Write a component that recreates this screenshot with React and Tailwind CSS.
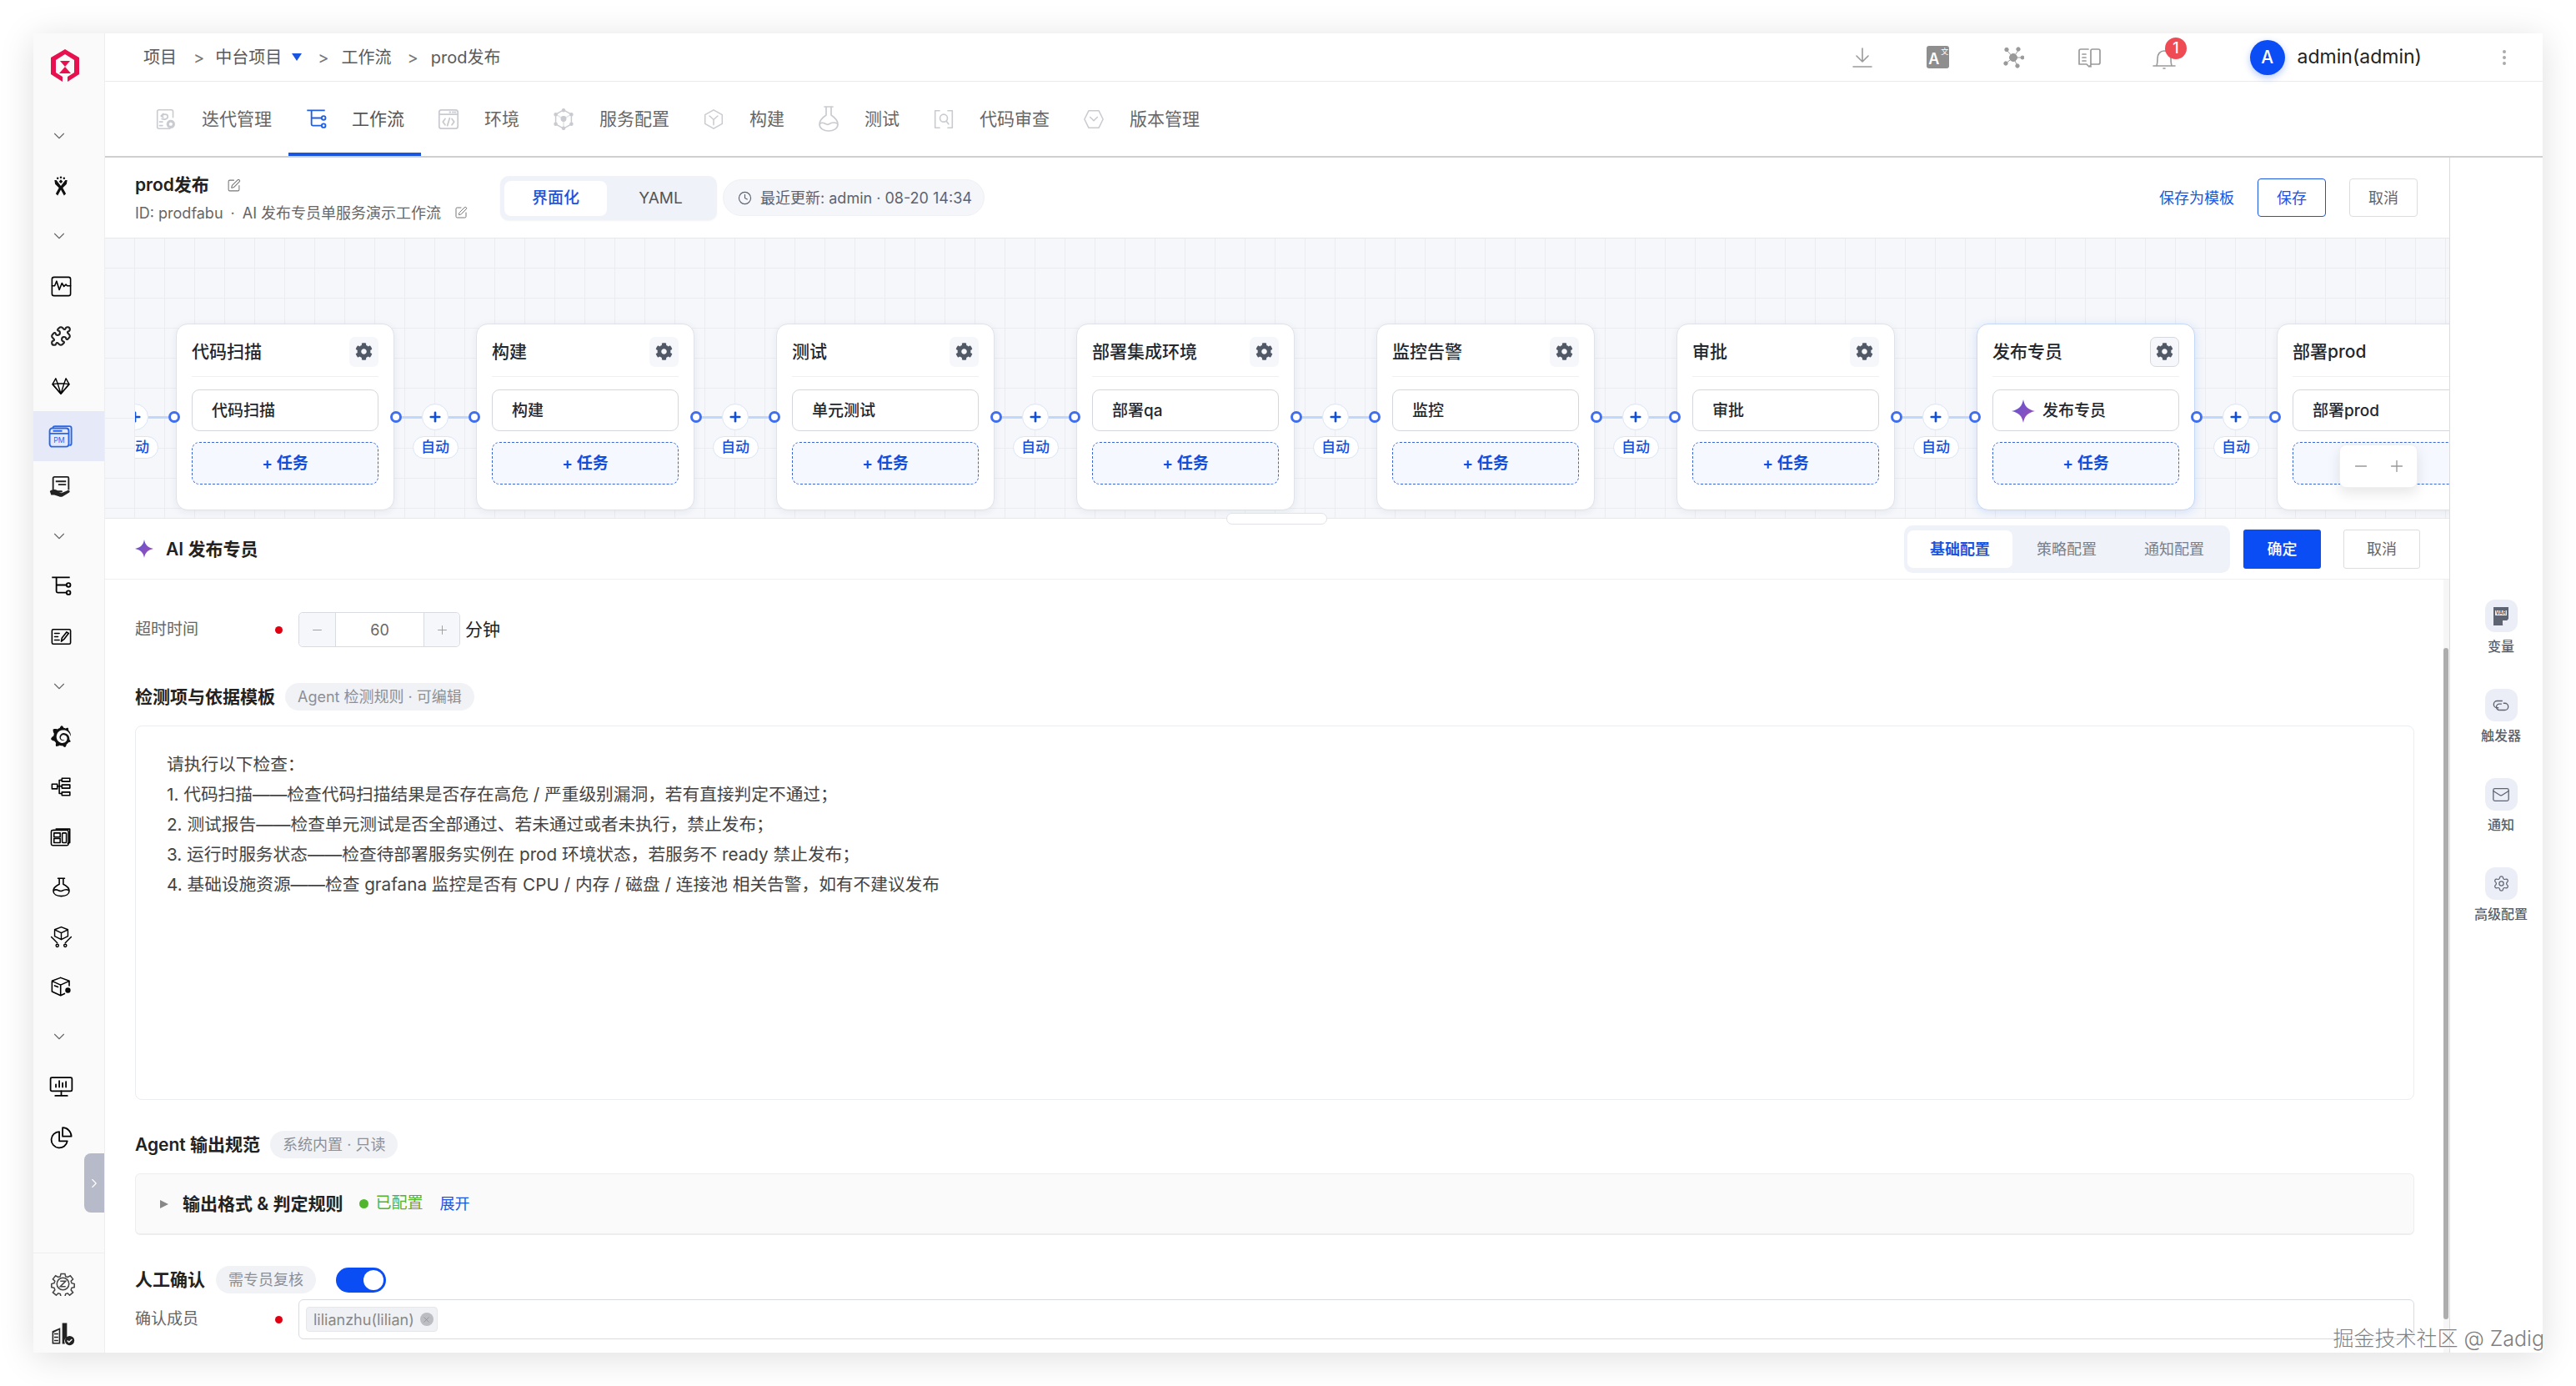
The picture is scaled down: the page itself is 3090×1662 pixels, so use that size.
import React from "react";
import { FaCog } from "react-icons/fa";
import { SiGrafana } from "react-icons/si";
import { ChevronDown, ChevronRight, Puzzle, Minus, Plus, Clock, SquarePen, EllipsisVertical, X, Settings, Mail } from "lucide-react";

const Svg = ({ s = 27, w, h, vb = "0 0 34 34", sw = 2, children, className = "" }) => (
  <svg width={w || s} height={h || s} viewBox={vb} fill="none" stroke="currentColor" strokeWidth={sw} strokeLinecap="round" strokeLinejoin="round" className={className}>{children}</svg>
);

const Logo = () => (
  <svg width="40" height="48" viewBox="0 0 40 48" fill="none">
    <path d="M15 6 20 3l5 3 12 7v20l-14 9V36l8-5V16l-11-7-11 7v15l8 5v6L3 33V13z" fill="#e8114f" />
    <path d="M14 17h12l-6 7zM20 24l7 8H13z" fill="#e8114f" />
  </svg>
);

const Jenkins = () => (
  <svg width="26" height="26" viewBox="0 0 34 34" fill="#111">
    <circle cx="12" cy="5" r="1.6" /><circle cx="17" cy="3.5" r="1.6" /><circle cx="22" cy="5" r="1.6" />
    <path d="M17 7l3 3-3 3-3-3z" />
    <path d="M7 8l3 0 7 9 7-9 3 0-1 6-6 6 5 9-3 3-5-9-5 9-3-3 5-9-6-6z" />
  </svg>
);
const Monitor = () => <Svg><rect x="3" y="3" width="28" height="28" rx="3" /><path d="M3 16h4l3-7 4 13 4-10 3 5 3-3 2 2h5" /></Svg>;
const Fox = () => (
  <Svg s={26} sw={1.8}><path d="M4 14 9 5l3 8h10l3-8 5 9-13 15z" /><path d="M4 14l13 15 M12 13l5 16 5-16 M30 14 17 29 M4 14l8-1 M30 14l-8-1" /></Svg>
);
const PM = () => (
  <svg width="30" height="30" viewBox="0 0 38 38" fill="none" stroke="#2a66ec" strokeWidth="2.400">
    <path d="M7 7c0-2 1-3 3-3h22c2 0 3 1 3 3v23c0 2-1 3-3 3" />
    <rect x="2" y="7" width="29" height="28" rx="4" />
    <path d="M2 15h29 M7 11h14" />
    <text x="16.5" y="29" fontSize="11" fontFamily="Inter" fill="#2a66ec" stroke="none" textAnchor="middle">PM</text>
  </svg>
);
const HandCard = () => (
  <svg width="28" height="27" viewBox="0 0 36 34" fill="none" stroke="#222" strokeWidth="2.400">
    <path d="M6 22V4c0-1 1-2 2-2h20c1 0 2 1 2 2v18" /><path d="M10 9h16M14 14h12" />
    <path d="M1 24c4-3 8-3 12-1h6c2 0 2 3 0 3h-4l4 1 9-4c3-1 5 1 3 3l-10 6c-2 1-4 1-6 0l-7-2H3z" fill="#222" stroke="none" />
  </svg>
);
const Flow = ({ color = "currentColor", s = 26 }) => (
  <svg width={s} height={s} viewBox="0 0 34 34" fill="none" stroke={color} strokeWidth="2.400">
    <path d="M3 3h28M10 3v22c0 1 1 2 2 2h14M10 15h16" /><circle cx="29" cy="15" r="3" /><circle cx="29" cy="27" r="3" />
  </svg>
);
const Edit2 = () => <Svg><rect x="3" y="6" width="28" height="22" rx="2" /><path d="M7 12h7M7 17h5M7 22h7M17 24l1-5 7-9 3 2-7 9z" /></Svg>;
const Modules = () => <Svg><rect x="3" y="13" width="8" height="7" /><rect x="18" y="4" width="12" height="5" /><rect x="18" y="14" width="12" height="5" /><rect x="18" y="25" width="12" height="5" /><path d="M11 16h7M14 7h4M14 7v20h4" /></Svg>;
const Panels = () => <Svg s={28} sw={1.9}><path d="M10 6h20v20l-3 1M6 8l24-2" /><rect x="3" y="8" width="25" height="22" rx="2" /><rect x="7" y="12" width="9" height="6" /><rect x="7" y="20" width="9" height="6" /><rect x="19" y="12" width="6" height="14" rx="1" /></Svg>;
const Flask = () => <Svg><path d="M12 4h10M14 4v9C8 16 5 19 5 23c0 5 5 8 12 8s12-3 12-8c0-4-3-7-9-10V4" /><path d="M6 22c5-3 8 3 12 1s7-3 10-1" /></Svg>;
const BoxHands = () => <Svg sw={1.8}><path d="M17 2l10 4v10l-10 5-10-5V6zM7 6l10 5 10-5M17 11v10" /><path d="M2 17l6 6 3 3M32 17l-6 6-3 3" /><circle cx="11" cy="30" r="2" /><circle cx="23" cy="30" r="2" /></Svg>;
const BoxGear = () => <Svg sw={2}><path d="M16 3l13 5v7M16 3 3 8v16l13 6 6-3M3 8l13 6 13-6M16 14v16M7 15l5 2" /><circle cx="27" cy="22" r="3" fill="#111" /></Svg>;
const Board = () => <Svg s={29} vb="0 0 36 36" sw={2.200}><rect x="2" y="4" width="32" height="20" rx="2" /><path d="M18 24v7M9 31h18M10 18v-4M15 18V9M20 18v-6M25 18v-8" /></Svg>;
const Pie = () => <Svg s={29} vb="0 0 36 36" sw={2.200}><path d="M15 10a12 12 0 1 0 12 14H15z" /><path d="M20 4a13 13 0 0 1 13 13H20z" /></Svg>;
const GearZ = () => (
  <svg width="29" height="29" viewBox="0 0 36 36" fill="none" stroke="#444" strokeWidth="1.900">
    <path d="M15 3h6l1 4 3 1 4-2 4 5-3 3 1 3 4 1v5l-4 1-1 3 3 4-5 4-3-3-3 1-1 4h-6l-1-4-3-1-3 3-5-4 3-4-1-3-4-1v-5l4-1 1-3-3-3 4-5 4 2 3-1z" />
    <circle cx="18" cy="18" r="9" /><path d="M14 14h8l-8 8h8" />
  </svg>
);
const Building = () => (
  <svg width="29" height="29" viewBox="0 0 36 36" fill="#222">
    <path d="M2 14 14 9v24H2zM4 16v15h8V12z" fillRule="evenodd" /><path d="M5 17h6v2H5zM5 22h6v2H5zM5 27h6v2H5z" />
    <path d="M17 2h7v21a8 8 0 0 0-3 10h-4z" /><circle cx="28" cy="28" r="7" /><path d="M24.500 28l2.500 2.500 4.500-4.500" stroke="#fafafa" strokeWidth="1.800" fill="none" />
  </svg>
);

const T1 = () => <Svg s={26} vb="0 0 29 29" sw={1.8}><path d="M20 27H5c-1 0-2-1-2-2V4c0-1 1-2 2-2h17c1 0 2 1 2 2v8" /><path d="M9 11c1-4 8-4 8 0s-5 4-8 3M11 7 8 10l3 2M6 18h4M6 23h4" /><circle cx="21" cy="21" r="4" strokeWidth="3.500" strokeDasharray="2.500 1" /></Svg>;
const T3 = () => <Svg s={26} vb="0 0 29 29"><rect x="2" y="2" width="25" height="25" rx="3" /><path d="M2 8h25M16 5h1M20 5h1M23 5h1M10 14l-3 4 3 4M19 14l3 4-3 4M16 13l-3 10" /></Svg>;
const T4 = () => <Svg s={26} vb="0 0 29 29" sw={1.7}><path d="M14.500 2 25 8v13l-10.500 6L4 21V8z" /><path d="M4 8l10.500 6L25 8M14.500 14v13" opacity=".5" /><circle cx="14.500" cy="14" r="3" fill="currentColor" /><circle cx="14.500" cy="2.500" r="1.700" fill="currentColor" /><circle cx="14.500" cy="26.500" r="1.700" fill="currentColor" /><circle cx="4" cy="8" r="1.700" fill="currentColor" /><circle cx="25" cy="8" r="1.700" fill="currentColor" /><circle cx="4" cy="21" r="1.700" fill="currentColor" /><circle cx="25" cy="21" r="1.700" fill="currentColor" /></Svg>;
const T5 = () => <Svg s={26} vb="0 0 29 29" sw={1.7}><path d="M14.500 2 26 8.500v12L14.500 27 3 20.500v-12z" /><path d="M9 10l5.500 5L20 10M14.500 15v7" /></Svg>;
const T6 = () => <Svg w={26} h={33} vb="0 0 26 33" sw={1.7}><path d="M8 2h10M10 2v10C4 16 2 20 2 23c0 5 5 8 11 8s11-3 11-8c0-3-2-7-8-11V2" /><path d="M3 22c4-3 7 3 10 1s6-3 10-1" /></Svg>;
const T7 = () => <Svg s={26} vb="0 0 29 29" sw={1.8}><path d="M9 3H3v23h6M20 3h6v23h-6" /><circle cx="14.500" cy="13" r="5" /><path d="M18 17l3 4" /></Svg>;
const T8 = () => <Svg w={26} h={24} vb="0 0 30 28" sw={1.8}><path d="M8 2h14l6 12-6 12H8L2 14z" /><path d="M10 11l5 5 5-5" /></Svg>;

const Card = ({ title, task, active, star }) => (
  <div className={`w-[262px] h-[224px] shrink-0 rounded-[14px] bg-white px-[18px] border ${active ? "border-[#c4d8f8] shadow-[0_2px_12px_rgba(60,110,220,0.18)]" : "border-[#dfe2e8] shadow-[0_2px_10px_rgba(30,40,70,0.07)]"}`}>
    <div className="h-[63px] pt-[3px] flex items-center justify-between border-b border-[#eff0f3] whitespace-nowrap">
      <span className="text-[21px] leading-[28px] font-medium text-[#23272e]">{title}</span>
      <span className={`w-[35px] h-[36px] rounded-[7px] flex items-center justify-center text-[#525966] bg-[#f5f7fb] ${active ? "border border-[#d5d8de]" : ""}`}>
        <FaCog size={21} />
      </span>
    </div>
    <div className="mt-[15px] h-[50px] pt-[2px] rounded-[9px] border border-[#d4d7dd] bg-white flex items-center pl-[23px] text-[19px] font-medium text-[#23272e] whitespace-nowrap">
      {star && <span className="mr-[9px] -ml-[1px]"><Star size={28} /></span>}{task}
    </div>
    <div className="mt-[13px] h-[51px] pt-[2px] rounded-[9px] border border-dashed border-[#3a66d8] bg-[#f5f8ff] flex items-center justify-center text-[19px] font-semibold text-[#0f4fe0] whitespace-nowrap">+ 任务</div>
  </div>
);

const Star = ({ size = 24 }) => (
  <svg width={size} height={size} viewBox="0 0 28 28" className="block">
    <defs><linearGradient id="st" x1="0" y1="0" x2="1" y2="1"><stop offset="0" stopColor="#5b57d6" /><stop offset="1" stopColor="#a34bb0" /></linearGradient></defs>
    <path d="M14 0c1.500 8 5 12 14 14-9 2-12.500 6-14 14-1.500-8-5-12-14-14 9-2 12.500-6 14-14z" fill="url(#st)" />
  </svg>
);

const Dot = () => <span className="w-[14px] h-[14px] rounded-full border-[3.5px] border-[#3f6fee] bg-white shrink-0" />;

const Connector = () => (
  <div className="w-[98px] shrink-0 relative z-10 pt-[96px] flex flex-col items-center">
    <div className="w-[108px] h-[32px] flex items-center shrink-0">
      <Dot />
      <span className="w-[24px] h-[3px] bg-[#bfd8fb]" />
      <span className="w-[32px] h-[32px] rounded-full bg-white border border-[#dbe5f5] flex items-center justify-center text-[#0f4fe0]"><Plus size={18} strokeWidth={3.5} /></span>
      <span className="w-[24px] h-[3px] bg-[#bfd8fb]" />
      <Dot />
    </div>
    <div className="mt-[7px] w-[55px] h-[27px] rounded-full bg-white border border-[#dbe5f5] flex items-center justify-center text-[17px] font-medium text-[#0f4fe0] whitespace-nowrap">自动</div>
  </div>
);

const Pill = ({ children, className = "" }) => (
  <span className={`h-[33px] px-[15px] rounded-full bg-[#f0f2f6] text-[#8c8f96] text-[18px] flex items-center whitespace-nowrap ${className}`}>{children}</span>
);

const Side = ({ children, active, pr = "pr-[19px]" }) => (
  <div className={`h-[60px] shrink-0 flex items-center justify-center ${pr} ${active ? "bg-[#e6eaf8]" : ""}`}>{children}</div>
);
const Chev = () => <span className="pr-[4px] text-[#666] flex"><ChevronDown size={22} strokeWidth={1.2} /></span>;

const Tab = ({ icon, text, active }) => (
  <div className={`h-full px-[20px] flex items-center gap-[30px] text-[21px] whitespace-nowrap border-b-[4px] pt-[4px] ${active ? "border-[#1a55e0] text-[#555]" : "border-transparent text-[#666]"}`}>
    <span className={active ? "text-[#1f5fe0] flex" : "text-[#c9cbd0] flex"}>{icon}</span>{text}
  </div>
);

const RightItem = ({ icon, label }) => (
  <div className="h-[107px] flex flex-col items-center">
    <span className="w-[39px] h-[39px] rounded-[12px] bg-[#eceef7] flex items-center justify-center text-[#5f6472]">{icon}</span>
    <span className="mt-[7px] text-[16px] leading-[20px] font-medium text-[#5a5f6a] whitespace-nowrap">{label}</span>
  </div>
);

const lines = [
  "请执行以下检查\uFF1A",
  "1. 代码扫描——检查代码扫描结果是否存在高危 / 严重级别漏洞\uFF0C若有直接判定不通过\uFF1B",
  "2. 测试报告——检查单元测试是否全部通过、若未通过或者未执行\uFF0C禁止发布\uFF1B",
  "3. 运行时服务状态——检查待部署服务实例在 prod 环境状态\uFF0C若服务不 ready 禁止发布\uFF1B",
  "4. 基础设施资源——检查 grafana 监控是否有 CPU / 内存 / 磁盘 / 连接池 相关告警\uFF0C如有不建议发布",
];

const cards = [
  { title: "代码扫描", task: "代码扫描" },
  { title: "构建", task: "构建" },
  { title: "测试", task: "单元测试" },
  { title: "部署集成环境", task: "部署qa" },
  { title: "监控告警", task: "监控" },
  { title: "审批", task: "审批" },
  { title: "发布专员", task: "发布专员", active: true, star: true },
  { title: "部署prod", task: "部署prod" },
];

const canvasBg = "bg-[#f5f7fb] bg-[linear-gradient(#e9edf3_1px,transparent_1px),linear-gradient(90deg,#e9edf3_1px,transparent_1px)] bg-[size:36px_36px] bg-[position:-1px_-1px]";

export default function App() {
  return (
    <div className="w-[3090px] h-[1662px] bg-white p-[40px] font-['Inter','Noto_Sans_CJK_SC',sans-serif] relative overflow-hidden">
      <div className="w-[3010px] h-[1582px] bg-white flex shadow-[0_6px_40px_rgba(0,0,0,0.13)] overflow-hidden relative">
        {/* sidebar */}
        <aside className="w-[86px] shrink-0 bg-[#fafafa] border-r border-[#eeeeee] flex flex-col relative">
          <div className="h-[93px] shrink-0 flex items-start justify-center pt-[16px] pr-[10px]"><Logo /></div>
          <Side><Chev /></Side>
          <Side><Jenkins /></Side>
          <Side><Chev /></Side>
          <Side><Monitor /></Side>
          <Side><Puzzle size={26} strokeWidth={1.9} className="text-[#222]" /></Side>
          <Side><Fox /></Side>
          <Side active><PM /></Side>
          <Side><HandCard /></Side>
          <Side><Chev /></Side>
          <Side><Flow /></Side>
          <Side><Edit2 /></Side>
          <Side><Chev /></Side>
          <Side><SiGrafana size={26} color="#111" /></Side>
          <Side><Modules /></Side>
          <Side><Panels /></Side>
          <Side><Flask /></Side>
          <Side><BoxHands /></Side>
          <Side><BoxGear /></Side>
          <Side><Chev /></Side>
          <Side><Board /></Side>
          <Side><Pie /></Side>
          <div className="flex-1" />
          <div className="h-[120px] shrink-0 border-t border-[#eeeeee] pt-[6px]">
            <Side pr="pr-[14px]"><GearZ /></Side>
            <Side pr="pr-[14px]"><Building /></Side>
          </div>
          <div className="absolute left-[61px] top-[1343px] w-[24px] h-[71px] rounded-l-[8px] bg-[#b7bbc9] flex items-center justify-center text-white"><ChevronRight size={18} strokeWidth={1.5} /></div>
        </aside>

        <main className="flex-1 min-w-0 flex flex-col">
          {/* header */}
          <header className="h-[58px] shrink-0 border-b border-[#ebebeb] flex items-center text-[20px] text-[#5a5a5a] whitespace-nowrap pl-[46px]">
            <span>项目</span>
            <span className="ml-[20px] text-[#777]">&gt;</span>
            <span className="ml-[13px]">中台项目</span>
            <span className="ml-[12px] w-0 h-0 border-x-[6.5px] border-x-transparent border-t-[9px] border-t-[#1a55e0]" />
            <span className="ml-[19px] text-[#777]">&gt;</span>
            <span className="ml-[15px]">工作流</span>
            <span className="ml-[19px] text-[#777]">&gt;</span>
            <span className="ml-[15px]">prod发布</span>
            <div className="ml-auto flex items-center">
              <span className="w-[90.5px] flex justify-center text-[#9a9a9a]"><Svg s={26} vb="0 0 26 26" sw={1.6}><path d="M13 2v16M6 11l7 7 7-7M2 24h22" /></Svg></span>
              <span className="w-[90.5px] flex justify-center">
                <span className="w-[27px] h-[27px] rounded-[3px] bg-[#8e8e8e] text-white text-[18px] font-semibold leading-none flex items-end pl-[2px] pb-[2px] relative">A<span className="absolute right-[1px] top-[2px] text-[9px] font-normal">文</span></span>
              </span>
              <span className="w-[90.5px] flex justify-center text-[#9a9a9a]">
                <svg width="26" height="26" viewBox="0 0 26 26" fill="currentColor" stroke="currentColor" strokeWidth="1"><path d="M13 13 5 4M13 13l7-10M13 13l11 0M13 13l5 10M13 13 4 20" /><circle cx="13" cy="13" r="4.500" /><circle cx="5" cy="3.500" r="2.200" /><circle cx="19" cy="3" r="2.200" /><circle cx="24" cy="13" r="2" /><circle cx="18" cy="23" r="2.200" /><circle cx="4" cy="20" r="2.200" /></svg>
              </span>
              <span className="w-[90.5px] flex justify-center text-[#9a9a9a]"><Svg s={28} vb="0 0 28 28" sw={1.7}><path d="M13 4H4c-1 0-2 1-2 2v16h9l3 3 3-3h8c1 0 2-1 2-2V6c0-1-1-2-2-2h-7c-1 0-2 1-2 2v19" /><path d="M6 10h4M6 14h4M6 18h4" /></Svg></span>
              <span className="w-[90.5px] flex justify-center text-[#9a9a9a] relative">
                <Svg s={28} vb="0 0 28 28" sw={1.6}><path d="M1 24h26M5 24c1-3 1-6 1-9 0-5 3-9 8-9s8 4 8 9c0 3 0 6 1 9M13 27h2" /></Svg>
                <span className="absolute left-[46px] -top-[10px] w-[26px] h-[26px] rounded-full bg-[#ef4b55] text-white text-[18px] font-medium flex items-center justify-center leading-none">1</span>
              </span>
            </div>
            <span className="ml-[57px] w-[42px] h-[42px] rounded-full bg-[#0b4df5] text-white text-[21px] font-medium flex items-center justify-center shadow-[0_3px_8px_rgba(11,77,245,0.3)]">A</span>
            <span className="ml-[15px] text-[23px] text-[#222]">admin(admin)</span>
            <span className="ml-[87px] mr-[34px] text-[#aaa] flex"><EllipsisVertical size={24} strokeWidth={2} /></span>
          </header>

          {/* tabs */}
          <nav className="h-[91px] shrink-0 border-b-2 border-[#cfcfcf] flex items-stretch pl-[40px]">
            <Tab icon={<T1 />} text="迭代管理" />
            <Tab icon={<Flow color="#1f5fe0" s={26} />} text="工作流" active />
            <Tab icon={<T3 />} text="环境" />
            <Tab icon={<T4 />} text="服务配置" />
            <Tab icon={<T5 />} text="构建" />
            <Tab icon={<T6 />} text="测试" />
            <Tab icon={<T7 />} text="代码审查" />
            <Tab icon={<T8 />} text="版本管理" />
          </nav>

          <div className="flex-1 min-h-0 flex">
            <div className="w-[2812px] shrink-0 min-w-0 flex flex-col relative">
              {/* title bar */}
              <div className="h-[96px] shrink-0 flex items-start pl-[36px] pr-[38px] pt-[22px] relative whitespace-nowrap">
                <div className="w-[438px] shrink-0 -mt-[4px]">
                  <div className="flex items-center h-[30px] text-[21px] font-semibold text-[#222]">prod发布<span className="ml-[21px] text-[#777] flex"><SquarePen size={17} strokeWidth={1.5} /></span></div>
                  <div className="flex items-center h-[30px] mt-[3px] text-[18px] text-[#666]">ID: prodfabu<span className="mx-[9px]">·</span>AI 发布专员单服务演示工作流<span className="ml-[16px] text-[#777] flex"><SquarePen size={16} strokeWidth={1.5} /></span></div>
                </div>
                <div className="w-[260px] h-[53px] rounded-[10px] bg-[#eff2f8] p-[5px] flex items-center text-[19px] shadow-[0_1px_2px_rgba(0,0,0,0.05)]">
                  <span className="w-[123px] h-[42px] pt-[1px] rounded-[8px] bg-white text-[#1a55e0] font-medium flex items-center justify-center">界面化</span>
                  <span className="flex-1 pt-[1px] pl-[2px] text-[#555] flex items-center justify-center">YAML</span>
                </div>
                <div className="ml-[7px] w-[314px] h-[44px] mt-[4px] rounded-full bg-[#f5f6fa] border border-[#f0f1f5] flex items-center pl-[17px] gap-[10px] text-[18px] text-[#5d6270]">
                  <Clock size={17} strokeWidth={1.6} />最近更新: admin · 08-20 14:34
                </div>
                <div className="ml-auto flex items-center h-[46px] mt-[3px] text-[18px]">
                  <span className="text-[#1a55e0]">保存为模板</span>
                  <span className="ml-[28px] w-[82px] h-[46px] rounded-[4px] border-[1.5px] border-[#1a55e0] text-[#1a55e0] flex items-center justify-center">保存</span>
                  <span className="ml-[28px] w-[82px] h-[46px] rounded-[4px] border border-[#dddddd] text-[#666] flex items-center justify-center">取消</span>
                </div>
              </div>

              {/* canvas */}
              <div className={`h-[337px] shrink-0 relative border-t border-b border-[#e6e8ee] pl-[36px] ${canvasBg}`}>
                <div className="h-full overflow-hidden">
                  <div className="flex pt-[102px] -ml-[49px] w-max">
                    {cards.map((c) => (
                      <React.Fragment key={c.title}>
                        <Connector />
                        <Card {...c} />
                      </React.Fragment>
                    ))}
                  </div>
                </div>
                <div className="absolute right-[38px] top-[247px] w-[94px] h-[52px] rounded-[8px] bg-white border border-[#f0f0f0] shadow-[0_6px_16px_rgba(0,0,0,0.1)] flex items-center justify-center gap-[21px] text-[#999] z-20">
                  <Minus size={22} strokeWidth={1.5} /><Plus size={22} strokeWidth={1.5} />
                </div>
                <div className="absolute left-[1345px] bottom-[-8px] w-[121px] h-[14px] rounded-full bg-white border border-[#e0e2e8] z-20" />
              </div>

              {/* config header */}
              <div className="h-[73px] shrink-0 border-b border-[#efefef] flex items-center pl-[36px] pr-[35px] whitespace-nowrap">
                <Star size={22} />
                <span className="ml-[15px] text-[21px] font-semibold text-[#222] pt-[2px]">AI 发布专员</span>
                <div className="ml-auto w-[391px] h-[57px] rounded-[10px] bg-[#eff2f8] pl-[4px] flex items-center text-[18px] text-[#7a7f8a]">
                  <span className="w-[126px] h-[45px] rounded-[7px] bg-white text-[#1a55e0] font-semibold flex items-center justify-center">基础配置</span>
                  <span className="w-[130px] text-center">策略配置</span>
                  <span className="w-[128px] text-center">通知配置</span>
                </div>
                <span className="ml-[16px] w-[93px] h-[47px] rounded-[3px] bg-[#0b4df5] text-white text-[18px] font-medium flex items-center justify-center">确定</span>
                <span className="ml-[27px] w-[92px] h-[47px] rounded-[3px] border border-[#dddddd] text-[18px] text-[#666] flex items-center justify-center">取消</span>
              </div>

              {/* content */}
              <div className="flex-1 min-h-0 pl-[36px] pr-[42px] whitespace-nowrap overflow-hidden">
                <div className="mt-[39px] h-[42px] flex items-center">
                  <span className="w-[168px] text-[19px] text-[#666]">超时时间</span>
                  <span className="w-[9px] h-[9px] rounded-full bg-[#e00012]" />
                  <div className="ml-[19px] w-[194px] h-[42px] rounded-[5px] border border-[#d8dbe0] flex items-center text-[#666]">
                    <span className="w-[44px] h-full bg-[#f5f7fa] border-r border-[#d8dbe0] rounded-l-[5px] flex items-center justify-center text-[#999]"><Minus size={17} strokeWidth={1.3} /></span>
                    <span className="flex-1 text-center text-[18px]">60</span>
                    <span className="w-[43px] h-full bg-[#f5f7fa] border-l border-[#d8dbe0] rounded-r-[5px] flex items-center justify-center text-[#999]"><Plus size={17} strokeWidth={1.3} /></span>
                  </div>
                  <span className="ml-[6px] text-[21px] text-[#222]">分钟</span>
                </div>

                <div className="mt-[43px] h-[33px] flex items-center">
                  <span className="text-[21px] font-semibold text-[#222]">检测项与依据模板</span>
                  <Pill className="ml-[12px]">Agent 检测规则 · 可编辑</Pill>
                </div>

                <div className="mt-[18px] h-[449px] rounded-[8px] border border-[#ebedf0] pl-[37px] pt-[28px] text-[20.7px] leading-[36px] text-[#444]">
                  {lines.map((l) => <div key={l}>{l}</div>)}
                </div>

                <div className="mt-[37px] h-[33px] flex items-center">
                  <span className="text-[21px] font-semibold text-[#222]">Agent 输出规范</span>
                  <Pill className="ml-[12px]">系统内置 · 只读</Pill>
                </div>

                <div className="mt-[18px] h-[74px] rounded-[6px] border border-[#eeeeee] border-b-2 bg-[#fafafa] flex items-center pl-[29px] text-[21px]">
                  <span className="w-0 h-0 border-y-[5.500px] border-y-transparent border-l-[10px] border-l-[#888]" />
                  <span className="ml-[17px] font-semibold text-[#222]">输出格式 &amp; 判定规则</span>
                  <span className="ml-[19px] w-[11px] h-[11px] rounded-full bg-[#52b52e]" />
                  <span className="ml-[9px] text-[19px] text-[#52b52e]">已配置</span>
                  <span className="ml-[20px] text-[18px] text-[#1a55e0]">展开</span>
                </div>

                <div className="mt-[37px] h-[33px] flex items-center">
                  <span className="text-[21px] font-semibold text-[#222]">人工确认</span>
                  <Pill className="ml-[13px]">需专员复核</Pill>
                  <span className="ml-[24px] w-[60px] h-[30px] rounded-full bg-[#0b4df5] flex items-center justify-end pr-[3px]"><span className="w-[24px] h-[24px] rounded-full bg-white" /></span>
                </div>

                <div className="mt-[7px] h-[48px] flex items-center">
                  <span className="w-[168px] text-[19px] text-[#666]">确认成员</span>
                  <span className="w-[9px] h-[9px] rounded-full bg-[#e00012]" />
                  <div className="ml-[19px] flex-1 h-[48px] rounded-[6px] border border-[#d8dbe0] flex items-center pl-[8px]">
                    <span className="h-[30px] w-[158px] rounded-[4px] bg-[#f0f1f4] border border-[#e6e7ea] flex items-center pl-[8px] text-[18px] text-[#888]">
                      lilianzhu(lilian)
                      <span className="ml-[7px] w-[16px] h-[16px] rounded-full bg-[#bbbdc2] text-[#888] flex items-center justify-center"><X size={11} strokeWidth={1.5} /></span>
                    </span>
                  </div>
                </div>
              </div>

              {/* scrollbar */}
              <div className="absolute right-0 top-[506px] bottom-0 w-[7px] bg-[#f6f6f6]">
                <div className="absolute top-[82px] h-[805px] w-[6px] left-0 rounded-full bg-[#adadad]" />
              </div>
            </div>

            {/* right panel */}
            <aside className="flex-1 border-l border-[#dddddd] pt-[530px] pl-[11px]">
              <RightItem label="变量" icon={
                <svg width="22" height="24" viewBox="0 0 22 24" fill="currentColor"><path d="M2 1h18v14l-7 8H2z" /><rect x="4" y="5" width="14" height="6" fill="#eceef7" /><text x="11" y="10" fontSize="6" fontFamily="Inter" fontWeight="700" textAnchor="middle">VAR</text><path d="M13 23v-6h7z" fill="#eceef7" /></svg>
              } />
              <RightItem label="触发器" icon={
                <svg width="22" height="22" viewBox="0 0 24 24" fill="none" stroke="currentColor" strokeWidth="1.5"><path d="M14 6H7a4.500 4.500 0 0 0 0 9h2" /><path d="M10 18h7a4.500 4.500 0 0 0 0-9h-2" /><path d="M10 18a4 4 0 0 1 0-8h3" /></svg>
              } />
              <RightItem label="通知" icon={<Mail size={22} strokeWidth={1.4} />} />
              <RightItem label="高级配置" icon={<Settings size={21} strokeWidth={1.4} />} />
            </aside>
          </div>
        </main>
      </div>
      <div className="absolute right-[38px] top-[1588px] text-[25px] leading-[34px] font-light text-[#7f7f7f] whitespace-nowrap [text-shadow:1px_1px_0_#ffffff]">掘金技术社区 @ Zadig</div>
    </div>
  );
}
